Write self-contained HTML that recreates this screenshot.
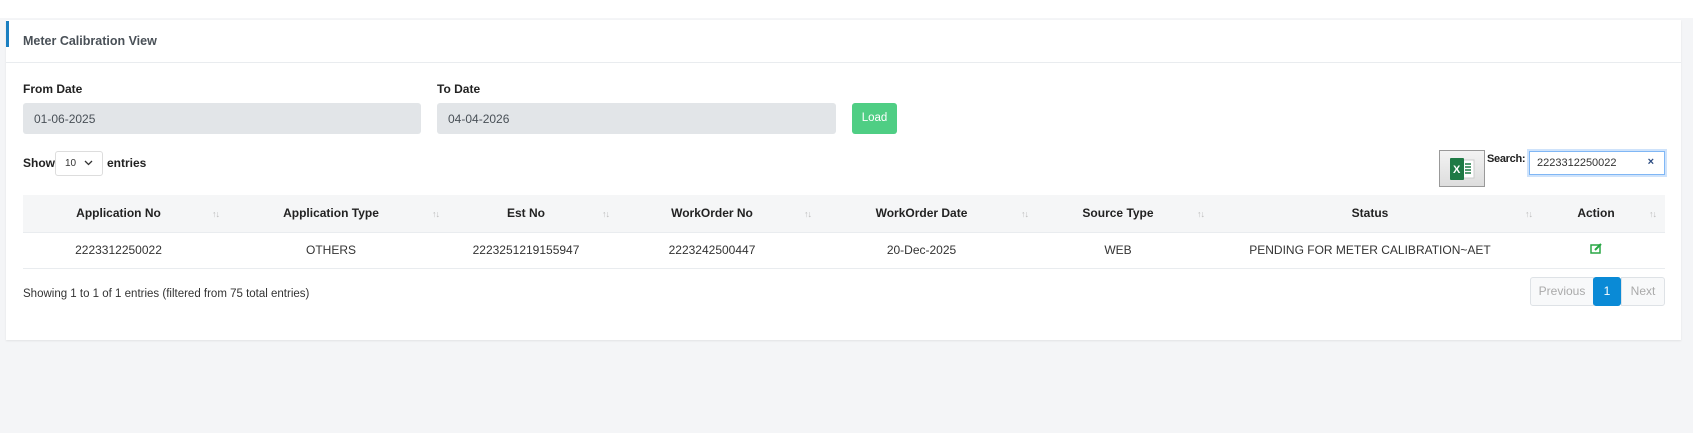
<!DOCTYPE html>
<html><head><meta charset="utf-8"><style>
*{box-sizing:border-box;margin:0;padding:0}
body{width:1693px;height:433px;background:#f4f5f7;font-family:"Liberation Sans",sans-serif;font-size:12px;color:#333;position:relative;overflow:hidden}
.top{position:absolute;left:0;top:0;width:1693px;height:18px;background:#fff}
.card{position:absolute;left:6px;top:20px;width:1675px;height:320px;background:#fff;box-shadow:0 1px 2px rgba(0,0,0,.08)}
.bl{position:absolute;left:0;top:1px;width:3px;height:26px;background:#1a7fc1}
.title{position:absolute;left:17px;top:14px;font-size:12.5px;color:#495057;font-weight:bold}
.hr{position:absolute;left:0;top:42px;width:100%;height:1px;background:#e9ecef}
.a{position:absolute}
.lbl{font-weight:bold;font-size:12px;color:#222}
.inp{background:#e2e5e8;border-radius:3px;height:31px;padding:9px 11px;font-size:12px;color:#495057}
.load{background:#4fce84;color:#fff;border-radius:3px;width:45px;height:31px;text-align:center;line-height:31px;font-size:11.5px}
table{border-collapse:collapse;position:absolute;left:17px;top:175px;width:1642px;table-layout:fixed}
th{background:#f5f6f7;height:37px;font-weight:bold;font-size:12px;color:#222;text-align:center;position:relative;padding-right:14px}
th i{position:absolute;right:9px;top:14px;font-style:normal;color:#bbb;font-size:9px;letter-spacing:-1px}
td{height:36px;text-align:center;font-size:12px;color:#333;border-top:1px solid #e9ecef;border-bottom:1px solid #e9ecef;padding-right:14px}
.pg{position:absolute;top:257px;height:29px;border:1px solid #dee2e6;font-size:12px;color:#aaa;line-height:27px;text-align:center;background:#f8f9fa}
</style></head><body>
<div class="top"></div>
<div class="card">
<div class="bl"></div>
<div class="title">Meter Calibration View</div>
<div class="hr"></div>
<div class="a lbl" style="left:17px;top:62px">From Date</div>
<div class="a inp" style="left:17px;top:83px;width:398px">01-06-2025</div>
<div class="a lbl" style="left:431px;top:62px">To Date</div>
<div class="a inp" style="left:431px;top:83px;width:399px">04-04-2026</div>
<div class="a load" style="left:846px;top:83px">Load</div>
<div class="a lbl" style="left:17px;top:136px">Show</div>
<div class="a" style="left:49px;top:131px;width:48px;height:25px;border:1px solid #ddd;border-radius:3px;font-size:10px;padding:6px 0 0 9px">10 &nbsp;&nbsp;<svg width="9" height="6" viewBox="0 0 9 6"><path d="M1 1l3.5 3.5L8 1" stroke="#333" stroke-width="1.3" fill="none"/></svg></div>
<div class="a lbl" style="left:101px;top:136px">entries</div>
<div class="a" style="left:1433px;top:130px;width:46px;height:37px;border:1px solid #999;background:linear-gradient(#f3f3f3,#ddd)"><svg width="26" height="24" viewBox="0 0 26 24" style="position:absolute;left:10px;top:6px"><rect x="7" y="3" width="17" height="18" fill="#fff" stroke="#ccc"/><path d="M15 7h6M15 10h6M15 13h6M15 16h6" stroke="#1f7a45" stroke-width="1.5"/><rect x="0" y="1" width="14" height="22" rx="1" fill="#1f7a45"/><text x="3" y="16" fill="#fff" font-size="11" font-family="Liberation Sans" font-weight="bold">X</text></svg></div>
<div class="a lbl" style="left:1481px;top:133px;font-size:11px;letter-spacing:-0.3px;white-space:nowrap">Search:</div>
<div class="a" style="left:1523px;top:131px;width:136px;height:24px;border:1px solid #80b7f5;box-shadow:0 0 0 2px #cfe3fb;font-size:11px;padding:5px 0 0 7px;color:#333">2223312250022<span style="position:absolute;right:10px;top:4px;color:#2a4a80;font-weight:bold">×</span></div>
<table>
<colgroup><col style="width:205px"><col style="width:220px"><col style="width:170px"><col style="width:202px"><col style="width:217px"><col style="width:176px"><col style="width:328px"><col style="width:124px"></colgroup>
<tr><th>Application No<i>↑↓</i></th><th>Application Type<i>↑↓</i></th><th>Est No<i>↑↓</i></th><th>WorkOrder No<i>↑↓</i></th><th>WorkOrder Date<i>↑↓</i></th><th>Source Type<i>↑↓</i></th><th>Status<i>↑↓</i></th><th>Action<i>↑↓</i></th></tr>
<tr><td>2223312250022</td><td>OTHERS</td><td>2223251219155947</td><td>2223242500447</td><td>20-Dec-2025</td><td>WEB</td><td>PENDING FOR METER CALIBRATION~AET</td><td><svg width="13" height="11" viewBox="0 0 13 11"><rect x="1" y="2" width="9" height="8" fill="none" stroke="#28a745" stroke-width="1.5"/><path d="M5 7l6-6" stroke="#28a745" stroke-width="2"/></svg></td></tr>
</table>
<div class="a" style="left:17px;top:268px;font-size:11.5px">Showing 1 to 1 of 1 entries (filtered from 75 total entries)</div>
<div class="pg" style="left:1524px;width:64px;border-radius:3px 0 0 3px">Previous</div>
<div class="pg" style="left:1587px;width:28px;background:#0a8ad6;color:#fff;border-color:#0a8ad6;border-radius:3px">1</div>
<div class="pg" style="left:1615px;width:44px;border-radius:0 3px 3px 0">Next</div>
</div>
</body></html>
